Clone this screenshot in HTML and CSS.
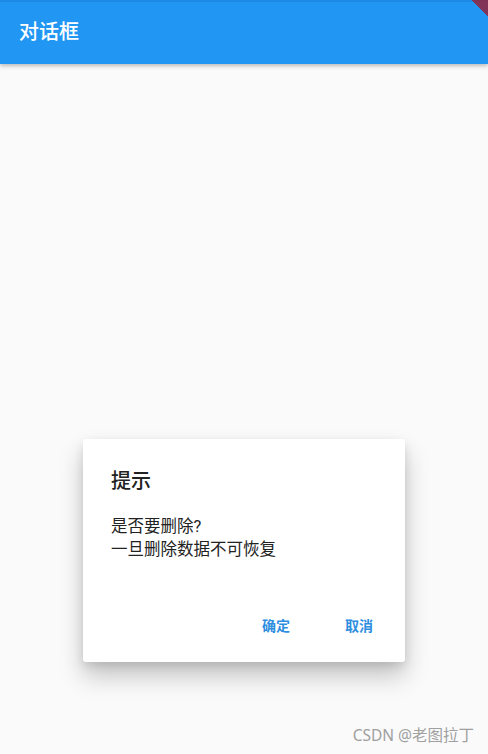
FILE: index.html
```html
<!DOCTYPE html>
<html lang="zh">
<head>
<meta charset="utf-8">
<link rel="stylesheet" href="styles.css">
</head>
<body>
<div class="app">
  <header class="appbar"><h1 class="appbar-title">对话框</h1></header>
  <div class="debug-corner"></div>
  <main class="content">
    <div class="dialog">
      <h2 class="dialog-title">提示</h2>
      <div class="dialog-body">
        <p>是否要删除?</p>
        <p>一旦删除数据不可恢复</p>
      </div>
      <div class="dialog-actions">
        <button class="btn">确定</button>
        <button class="btn">取消</button>
      </div>
    </div>
  </main>
  <div class="watermark">CSDN @老图拉丁</div>
</div>
</body>
</html>
```
FILE: styles.css
```css
* { box-sizing: border-box; }
html, body { margin: 0; padding: 0; }
body {
  width: 488px;
  height: 754px;
  overflow: hidden;
  background: #fafafa;
  font-family: Roboto, "Noto Sans CJK SC", sans-serif;
}
.app {
  position: relative;
  width: 488px;
  height: 754px;
  overflow: hidden;
  display: flex;
  flex-direction: column;
}
.appbar {
  height: 64px;
  background: #2196f3;
  border-top: 2px solid #1e88e5;
  display: flex;
  align-items: center;
  padding-left: 19px;
  box-shadow: 0 2px 4px rgba(0,0,0,0.25);
  position: relative;
  z-index: 2;
}
.appbar-title {
  margin: 0;
  color: #fff;
  font-size: 20px;
  font-weight: 500;
  line-height: 1;
  padding-bottom: 2px;
}
.debug-corner {
  position: absolute;
  top: 0;
  right: 0;
  width: 16px;
  height: 16px;
  background: linear-gradient(to bottom left, rgba(145, 35, 60, 0.85) 50%, transparent 50%);
  z-index: 3;
}
.content {
  flex: 1;
  display: flex;
  flex-direction: column;
  align-items: center;
  padding-top: 375px;
}
.dialog {
  width: 322px;
  height: 223px;
  background: #fff;
  border-radius: 3px;
  box-shadow: 0 14px 24px rgba(0,0,0,0.22), 0 4px 10px rgba(0,0,0,0.10);
  padding: 30px 28px 0 28px;
  display: flex;
  flex-direction: column;
}
.dialog-title {
  margin: 0;
  font-size: 20px;
  font-weight: 500;
  line-height: 24px;
  color: #222;
}
.dialog-body {
  margin-top: 22px;
  font-size: 16.5px;
  line-height: 23px;
  color: #222;
}
.dialog-body p { margin: 0; }
.dialog-actions {
  margin-top: auto;
  margin-bottom: 27px;
  display: flex;
  justify-content: flex-end;
  gap: 55px;
  padding-right: 4px;
}
.btn {
  border: none;
  background: none;
  padding: 0;
  font-family: Roboto, "Noto Sans CJK SC", sans-serif;
  font-size: 14px;
  font-weight: 700;
  color: #2d8ee0;
  line-height: 18px;
}
.watermark {
  position: absolute;
  right: 14px;
  bottom: 8px;
  font-size: 15.5px;
  color: #a0a0a0;
  font-family: "Noto Sans", "Noto Sans CJK SC", sans-serif;
}
```
